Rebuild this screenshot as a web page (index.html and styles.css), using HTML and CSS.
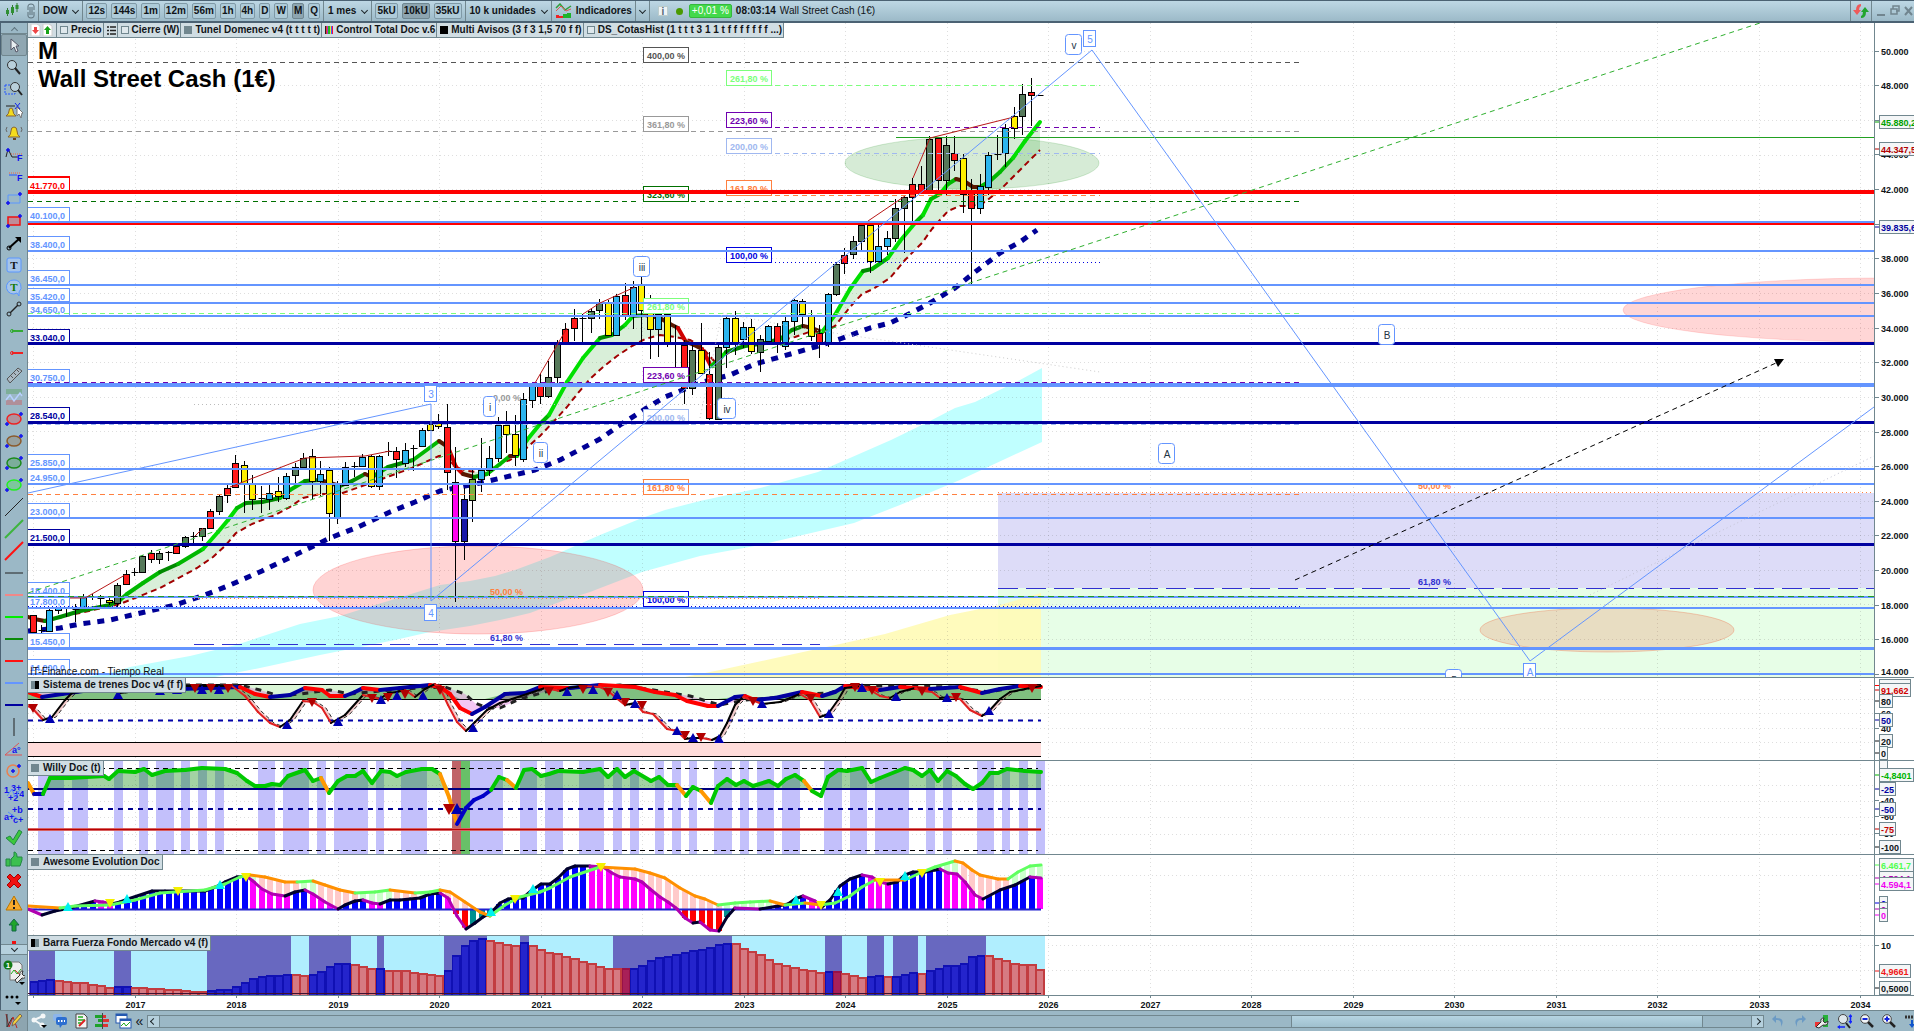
FILE: index.html
```html
<!DOCTYPE html>
<html lang="es">
<head>
<meta charset="utf-8">
<title>Wall Street Cash (1€)</title>
<link rel="stylesheet" href="styles.css">
</head>
<body>
<header class="topbar">
  <div class="group logo">
    <svg width="14" height="16" viewBox="0 0 14 16"><path d="M2.500 5v8M7.500 2v10M12 0v9" stroke="#2f7d32"/><path d="M1 7h3v4H1zM6 4h3v6H6zM10.500 2h3v4h-3z" fill="#2f8f33"/></svg>
    <svg width="8" height="16" viewBox="0 0 8 16"><path d="M1 7V3q0-2 3-2t3 2v4M1 9v4q0 2 3 2t3-2V9M3 4v8M5 4v8" fill="none" stroke="#5d717b"/></svg>
  </div>
  <button class="menu">DOW<span class="caret"></span></button>
  <div class="group frames">
    <button>12s</button><button>144s</button><button>1m</button><button>12m</button><button>56m</button><button>1h</button><button>4h</button><button>D</button><button>W</button><button class="on">M</button><button>Q</button>
  </div>
  <button class="menu">1 mes<span class="caret"></span></button>
  <div class="group units"><button>5kU</button><button class="on">10kU</button><button>35kU</button></div>
  <button class="menu">10 k unidades<span class="caret"></span></button>
  <button class="menu indicators">
    <svg width="18" height="16" viewBox="0 0 18 16"><path d="M1 5l4-4 5 6 6-4" fill="none" stroke="#2f9d3a" stroke-width="1.500"/><path d="M1 8l5-5 5 5 5-2" fill="none" stroke="#d55"/><path d="M1 15v-3h3v1h4v2z" fill="#e22"/><path d="M8 15v-4h4v-1h4v5z" fill="#1db32a"/></svg>
    Indicadores</button>
  <button class="menu narrow" aria-label="Más"><span class="caret"></span></button>
  <div class="status">
    <span class="info">i</span><span class="dot"></span><span class="badge">+0,01 %</span><b>08:03:14</b><span>Wall Street Cash (1€)</span>
  </div>
  <button class="menu sync" aria-label="Sincronizar"><svg width="16" height="16" viewBox="0 0 16 16"><path d="M8 1Q3 1 3 7H0l4 5 4-5H6q0-3 2-4z" fill="#ee5a5a"/><path d="M8 15q5 0 5-6h3l-4-5-4 5h2q0 3-2 4z" fill="#22a52f"/></svg></button>
  <div class="winctl">
    <svg width="36" height="12" viewBox="0 0 36 12"><path d="M0 10h8" stroke="#71858f" stroke-width="2"/><path d="M16 4V1h6v5h-3M14 4h6v5h-6z" fill="none" stroke="#71858f" stroke-width="1.500"/><path d="M28 2l7 8M35 2l-7 8" stroke="#71858f" stroke-width="2"/></svg>
  </div>
</header>
<div class="body">
  <nav class="side" aria-label="Herramientas">
    <button class="fold" aria-label="Subir"><span class="caret up"></span></button>
    <div class="tools" id="tools"></div>
    <button class="fold more" aria-label="Bajar"><span class="caret"></span></button>
    <div class="extra">
      <svg width="22" height="26" viewBox="0 0 22 26"><path d="M7 3h9l3 3v15H7z" fill="#eee" stroke="#777"/><path d="M8 15l3-4 3 4 4-5" stroke="#2a2" fill="none"/><path d="M12 11l6 6" stroke="#d33"/><circle cx="5" cy="6" r="4.500" fill="#117a17"/><text x="5" y="9" class="tiny">1</text><path d="M12 21l5-5q-1-4 3-4l-1 3 2 2 2-1q0 4-4 3l-5 5z" fill="#eee" stroke="#333"/><path d="M16 23h6l-3 3z"/></svg>
      <svg width="22" height="14" viewBox="0 0 22 14"><circle cx="4" cy="4" r="1.500"/><circle cx="9" cy="4" r="1.500"/><circle cx="14" cy="4" r="1.500"/><path d="M12 9h6l-3 3z"/></svg>
    </div>
  </nav>
  <main class="charts">
    <div class="tabs">
      <span class="tab arrows"><svg width="24" height="12" viewBox="0 0 24 12"><path d="M1 0h6l3 2v10H1zM13 0h6l3 2v10h-9z" fill="#fff" stroke="#ccc"/><path d="M5.500 10L2 6h2V3h3v3h2z" fill="#e44"/><path d="M17.500 2L14 6h2v4h3V6h2z" fill="#18a318"/></svg></span>
      <label class="tab"><input type="checkbox">Precio</label>
      <span class="tab"><svg width="9" height="9" viewBox="0 0 9 9"><path d="M0 1h2M3 1h6M0 4.500h2M3 4.500h6M0 8h2M3 8h6" stroke="#222" stroke-width="1.500"/></svg></span>
      <label class="tab"><input type="checkbox">Cierre (W)</label>
      <span class="tab"><i class="sw gray"></i>Tunel Domenec v4 (t t t t t)</span>
      <span class="tab"><i class="sw rainbow"></i>Control Total Doc v.6</span>
      <span class="tab"><i class="sw black"></i>Multi Avisos (3 f 3 1,5 70 f f)</span>
      <label class="tab"><input type="checkbox">DS_CotasHist (1 t t t 3 1 1 t f f f f f f f ...)</label>
    </div>
    <section class="panel main"><svg class="plot" id="p-main"></svg><svg class="axis" id="a-main"></svg>
      <div class="watermark">M<br>Wall Street Cash (1€)</div></section>
    <section class="panel p1"><svg class="plot" id="p-trenes"></svg><svg class="axis" id="a-trenes"></svg><h2 class="ptitle"><i class="sw half"></i>Sistema de trenes Doc v4 (f f)</h2></section>
    <section class="panel p2"><svg class="plot" id="p-willy"></svg><svg class="axis" id="a-willy"></svg><h2 class="ptitle"><i class="sw gray"></i>Willy Doc (t)</h2></section>
    <section class="panel p3"><svg class="plot" id="p-awesome"></svg><svg class="axis" id="a-awesome"></svg><h2 class="ptitle"><i class="sw gray"></i>Awesome Evolution Doc</h2></section>
    <section class="panel p4"><svg class="plot" id="p-barra"></svg><svg class="axis" id="a-barra"></svg><h2 class="ptitle"><i class="sw half2"></i>Barra Fuerza Fondo Mercado v4 (f)</h2></section>
    <section class="timeline"><svg class="plot" id="p-time"></svg></section>
  </main>
</div>
<footer class="bottombar">
  <button class="pencil" aria-label="Dibujar"><svg width="18" height="16" viewBox="0 0 18 16"><path d="M1 1l3 13 4-10 4 11" fill="none" stroke="#b22"/><path d="M2 1v13l5-9" fill="none" stroke="#333"/><path d="M7 13l1-4 7-8 2 2-7 8z" fill="#f4d13c" stroke="#765"/></svg></button>
  <div class="group icons">
    <button aria-label="Compartir"><svg width="16" height="16" viewBox="0 0 16 16"><path d="M12 3L3 7l8 5" fill="none" stroke="#f4f7f8" stroke-width="2"/><circle cx="12" cy="3" r="2.500" fill="#f4f7f8"/><circle cx="3" cy="7" r="2.500" fill="#f4f7f8"/><circle cx="11" cy="12" r="2.500" fill="#f4f7f8"/><path d="M10 12h6l-3 3z"/></svg></button>
    <button aria-label="Chat"><svg width="16" height="16" viewBox="0 0 16 16"><rect x="1" y="1" width="9" height="7" rx="2" fill="#8db5ea"/><rect x="4" y="4" width="11" height="8" rx="2" fill="#2d6fd0"/><path d="M7 11l1 4 3-4z" fill="#2d6fd0"/><path d="M6 8h7" stroke="#fff" stroke-width="2" stroke-dasharray="1.500 1.500"/></svg></button>
    <button aria-label="Informe"><svg width="16" height="16" viewBox="0 0 16 16"><path d="M3 1h8l3 3v11H3z" fill="#f4f4f4" stroke="#444"/><path d="M5 4h5M5 7h7M5 10h3" stroke="#2a2" stroke-width="1.500"/><path d="M6 13l6-6" stroke="#d22" stroke-width="2"/></svg></button>
    <button aria-label="Ordenes"><svg width="16" height="16" viewBox="0 0 16 16"><path d="M1 2h7v3H1zM4 6h4v3H4zM1 11h7v3H1z" fill="#1da22c"/><path d="M9 2h3v3H9zM9 6h6v3H9zM9 11h5v3H9z" fill="#d33"/><path d="M8.500 0v16" stroke="#444"/></svg></button>
    <button aria-label="Ventanas"><svg width="17" height="16" viewBox="0 0 17 16"><rect x="1" y="1" width="11" height="9" fill="#fff" stroke="#2459b0"/><path d="M1 2h11" stroke="#2459b0" stroke-width="2"/><rect x="5" y="6" width="11" height="9" fill="#fff" stroke="#2459b0"/><path d="M5 7h11" stroke="#2459b0" stroke-width="2"/><path d="M6 13l3-3 2 3 4-4" fill="none" stroke="#2a2"/></svg></button>
  </div>
  <button class="dbl" aria-label="Plegar">«</button>
  <div class="scroll">
    <button aria-label="Izquierda"><span class="caret left"></span></button>
    <div class="track"><div class="thumb"></div></div>
    <button aria-label="Derecha"><span class="caret right"></span></button>
  </div>
  <div class="group zooms">
    <button aria-label="Deshacer"><svg width="14" height="14" viewBox="0 0 14 14"><path d="M5 1L1 5l4 4V6q6-1 5 7 5-9-5-9z" fill="#6b9ac4"/></svg></button>
    <button aria-label="Rehacer"><svg width="14" height="14" viewBox="0 0 14 14"><path d="M9 1l4 4-4 4V6Q3 5 4 13-1 4 9 4z" fill="#6b9ac4"/></svg></button>
    <button aria-label="Ajustes"><svg width="14" height="15" viewBox="0 0 14 15"><path d="M8 1h5v12H8z" fill="#27b13a"/><path d="M0 8h6v5H0z" fill="#e33"/><path d="M1 13l5-5q-1-4 3-4l-1 3 2 2 3-2q0 5-5 4l-4 3z" fill="#eee" stroke="#333"/></svg></button>
    <button aria-label="Ajustar zoom"><svg width="15" height="15" viewBox="0 0 15 15"><circle cx="6" cy="5" r="4.500" fill="#dfe8ec" stroke="#444"/><path d="M9 9l4 5" stroke="#222" stroke-width="2"/><path d="M13.500 1v8M1 13h7" stroke="#12f" stroke-width="1.500"/><path d="M11.500 3l2-3 2 3zM11.500 7l2 3 2-3zM3 11l-3 2 3 2z" fill="#12f"/></svg></button>
    <button aria-label="Alejar"><svg width="14" height="14" viewBox="0 0 14 14"><path d="M8 8l5 5" stroke="#222" stroke-width="2.500"/><circle cx="5" cy="5" r="4.300" fill="#f2f6f8" stroke="#444"/><path d="M2.500 5h5" stroke="#12d" stroke-width="2"/></svg></button>
    <button aria-label="Acercar"><svg width="14" height="14" viewBox="0 0 14 14"><path d="M8 8l5 5" stroke="#222" stroke-width="2.500"/><circle cx="5" cy="5" r="4.300" fill="#f2f6f8" stroke="#444"/><path d="M2.500 5h5M5 2.500v5" stroke="#12d" stroke-width="2"/></svg></button>
    <button aria-label="Fecha"><svg width="14" height="14" viewBox="0 0 14 14"><path d="M1 3h13" stroke="#333" stroke-width="3" stroke-dasharray="2 1"/><path d="M5 10l3 4 3-4H9V6H7v4z" fill="#15c"/></svg></button>
  </div>
</footer>
<script src="chart.js"></script>
</body>
</html>
```

FILE: styles.css
```css
* { box-sizing: border-box; }
html, body { height: 100%; margin: 0; }
body {
  display: flex;
  flex-direction: column;
  overflow: hidden;
  background: #fff;
  color: #101418;
  font: bold 10px/12px "Liberation Sans", Arial, sans-serif;
}
button {
  margin: 0;
  padding: 0;
  border: 0;
  background: none;
  color: inherit;
  font: inherit;
}
svg { display: block; flex: none; }

.topbar {
  flex: none;
  display: flex;
  height: 23px;
  border-top: 1px solid #4b6273;
  border-bottom: 2px solid #4b6273;
  background: linear-gradient(#bdd7e4, #9cbac8);
}
.group { display: flex; align-items: center; }
.logo { gap: 8px; width: 39px; padding: 0 5px; border-right: 1px solid #71878f; }
.menu {
  display: flex;
  align-items: center;
  gap: 6px;
  padding: 0 4px;
  border-right: 1px solid #71878f;
}
.caret {
  flex: none;
  width: 5px;
  height: 5px;
  border: solid #1d262b;
  border-width: 0 1px 1px 0;
  transform: translateY(-1px) rotate(45deg);
}
.caret.up { transform: translateY(2px) rotate(225deg); border-color: #5f747e; }
.caret.left { transform: rotate(135deg); }
.caret.right { transform: rotate(-45deg); }
.frames, .units { gap: 4px; padding: 0 3px; border-right: 1px solid #71878f; }
.frames button, .units button {
  height: 16px;
  padding: 0 1px;
  border: 1px solid #7f99a6;
  border-radius: 2px;
  background: #aecbd9;
}
.frames .on, .units .on { background: #8da5b0; border-color: #6f8791; }
.indicators { gap: 3px; padding: 0 3px; }
.status { flex: 1; display: flex; align-items: center; gap: 4px; padding-left: 8px; font-weight: normal; }
.info { width: 10px; height: 10px; background: #eef3f5; border: 1px solid #bcc; color: #567; line-height: 9px; text-align: center; font-weight: bold; }
.dot { width: 7px; height: 7px; margin: 0 2px 0 4px; border-radius: 50%; background: #4a9a00; }
.badge { padding: 0 2px; border-radius: 2px; background: #43d94b; border: 1px solid #34b83c; color: #fff; }
.sync { padding: 0 2px; border-left: 1px solid #71878f; }
.winctl { display: flex; align-items: center; padding-left: 5px; width: 28px; overflow: hidden; }
.winctl { width: 42px; }

.body { flex: 1; display: flex; min-height: 0; }
.side {
  flex: none;
  display: flex;
  flex-direction: column;
  width: 28px;
  border-left: 1px solid #4b6273;
  border-right: 1px solid #71878f;
  background: #9bb8c6;
}
.fold { flex: none; display: flex; justify-content: center; align-items: center; height: 11px; border-bottom: 1px solid #71878f; }
.fold.more { border: 1px solid #71878f; border-width: 1px 0; background: #b5d0dd; }
.tools { flex: 1; min-height: 0; overflow: hidden; }
.tool { display: flex; align-items: center; justify-content: center; width: 26px; height: 22px; }
.tool.on { background: #90a7b2; border: 1px solid #71878f; border-radius: 2px; }
.extra { flex: none; display: flex; flex-direction: column; align-items: center; gap: 8px; height: 55px; padding-top: 4px; }
text.tiny { font-size: 8px; fill: #fff; text-anchor: middle; }
text.letter { font: bold 11px "Liberation Serif", serif; text-anchor: middle; }

.charts { flex: 1; position: relative; display: flex; flex-direction: column; min-width: 0; }
.tabs { position: absolute; left: 0; top: 0; z-index: 2; display: flex; height: 15px; }
.tab {
  display: flex;
  align-items: center;
  gap: 3px;
  padding: 0 1px 0 3px;
  border: solid #71878f;
  border-width: 0 1px 1px 0;
  background: #d0dde3;
  white-space: nowrap;
}
.arrows { padding: 0 2px; }
.tab input { flex: none; appearance: none; width: 8px; height: 8px; margin: 0; border: 1px solid #71878f; background: #dfe8ec; }
.sw { flex: none; width: 8px; height: 8px; background: #71878f; }
.black { background: #000; }
.rainbow { background: linear-gradient(90deg, #222 0 1px, #e33 1px 2px, #a3c 2px 3px, #2b2 3px 5px, #e8e83a 5px 6px, #36f 6px 7px, #f04 7px); }
.half { background: linear-gradient(90deg, #71878f 50%, #000 50%); }
.half2 { background: linear-gradient(90deg, #000 50%, #71878f 50%); }
.panel { position: relative; display: flex; min-height: 0; border-top: 1px solid #71878f; }
.panel.main { flex: 1; border-top: 0; }
.p1 { height: 83px; }
.p2 { height: 94px; }
.p3 { height: 81px; }
.p4 { height: 60px; }
.plot { flex: 1; min-width: 0; height: 100%; }
.axis { width: 40px; height: 100%; border-left: 1px solid #71878f; }
.timeline { flex: none; height: 15px; display: flex; border-top: 1px solid #71878f; }
.ptitle {
  position: absolute;
  left: 0;
  top: 0;
  display: flex;
  align-items: center;
  gap: 4px;
  height: 15px;
  margin: 0;
  padding: 0 2px 0 3px;
  border: solid #71878f;
  border-width: 0 1px 1px 0;
  background: #d0dde3;
  font: inherit;
}
.watermark { position: absolute; left: 10px; top: 14px; font-size: 24px; line-height: 28px; color: #000; }
text { font: bold 9px "Liberation Sans", Arial, sans-serif; }
text.mid { text-anchor: middle; }
text.wave { font-weight: normal; font-size: 10px; text-anchor: middle; }
text.plain { font-weight: normal; font-size: 10px; }
text.year { font-size: 9px; text-anchor: middle; }

.bottombar { flex: none; display: flex; align-items: center; height: 21px; border-top: 1px solid #71878f; background: #9bb8c6; }
.pencil { display: flex; align-items: center; justify-content: center; width: 28px; height: 20px; border-right: 1px solid #71878f; background: #8da5b0; }
.icons { gap: 5px; padding-left: 3px; }
.dbl { width: 15px; font-size: 14px; font-weight: normal; }
.scroll { flex: 1; display: flex; height: 13px; border: 1px solid #71878f; }
.scroll button { width: 12px; display: flex; align-items: center; justify-content: center; background: #b5d0dd; border-right: 1px solid #71878f; }
.scroll button:last-child { border: 0; border-left: 1px solid #71878f; }
.track { flex: 1; display: flex; padding-left: 70%; padding-right: 3%; }
.thumb { flex: 1; border: 1px solid #71878f; border-width: 0 1px; background: linear-gradient(#b5d4e2, #9fc0ce); }
.zooms { gap: 8px; width: 150px; padding-left: 7px; overflow: hidden; }
```

FILE: chart.js
```js
const STEP = 8.458, X0 = 33.5;
const AXIS = '#71878f';
const xAt = i => X0 + i * STEP;
const pts = a => a.map(p => p.join()).join(' ');
const line = (x1, y1, x2, y2, c, w = 1, d = '') =>
  `<line x1="${x1}" y1="${y1}" x2="${x2}" y2="${y2}" stroke="${c}" stroke-width="${w}" stroke-dasharray="${d}"/>`;
const rect = (x, y, w, h, f, s = 'none', r = 0) =>
  `<rect x="${x}" y="${y}" width="${w}" height="${h}" fill="${f}" stroke="${s}" rx="${r}"/>`;
const poly = (a, c, w = 1, d = '') =>
  `<polyline points="${pts(a)}" fill="none" stroke="${c}" stroke-width="${w}" stroke-dasharray="${d}" stroke-linejoin="round"/>`;
const area = (a, f) => `<polygon points="${pts(a)}" fill="${f}"/>`;
const text = (x, y, t, c, k = '') => `<text x="${x}" y="${y}" fill="${c}" class="${k}">${t}</text>`;
const tri = (x, y, up, c, r = 5) => `<path d="M${x - r} ${up ? y + r - 1 : y - r + 1}h${2 * r}l${-r} ${up ? -2 * r + 1 : 2 * r - 1}z" fill="${c}"/>`;
const P = s => s.trim().split(/\s+/).map(p => p.split(',').map(Number));
const yOn = (a, x) => {
  for (let i = 1; i < a.length; i++) if (x <= a[i][0]) {
    const [p, q] = [a[i - 1], a[i]];
    return p[1] + (q[1] - p[1]) * (x - p[0]) / (q[0] - p[0]);
  }
  return a[a.length - 1][1];
};
const bySlope = (a, w, pick) => a.slice(1).map((q, i) => {
  const p = a[i];
  return `<line x1="${p[0]}" y1="${p[1]}" x2="${q[0]}" y2="${q[1]}" stroke="${pick((q[1] - p[1]) / (q[0] - p[0]), q)}" stroke-width="${w}" stroke-linecap="round"/>`;
}).join('');
const put = (id, x, y, s) => { document.getElementById(id).innerHTML = `<g transform="translate(${-x},${-y})">${s}</g>`; };
const FAR = 4000;
const vgrid = (y1, y2) => {
  let s = '';
  for (let k = 0; k < 30; k++) { const x = Math.round(X0 + 101.5 * k - .4) + 0.5; s += line(x, y1, x, y2, 'rgba(90,90,90,.2)', 1, '1 3'); }
  return s;
};
const hgrid = ys => ys.map(y => line(28, y + .5, FAR, y + .5, 'rgba(90,90,90,.2)', 1, '1 3')).join('');

// Candles: colour, high, top, bottom, low
const COL = { r: '#ff1a1a', y: '#fff000', b: '#2cb5ee', g: '#56795a', k: '#000', m: '#ff00ee', n: '#1818a8', o: '#7cb342' };
const CANDLES = `r,615,615,632,633 k,625,630,631,633 b,608,610,631,632 b,606,608,610,614 k,600,607,608,617 k,604,609,610,622
b,594,597,607,608 k,594,597,598,600 k,595,598,599,606 y,598,600,602,605 g,583,585,603,607 r,570,574,584,585 k,568,572,573,576
g,555,556,572,573 r,550,553,559,563 g,551,553,559,564 k,551,552,553,561 r,544,546,553,554 g,536,537,546,548 k,532,536,537,543
g,528,528,536,541 r,509,511,528,529 g,495,496,511,515 r,485,488,495,503 r,455,463,487,488 y,461,465,483,513 y,475,483,499,510
k,486,498,499,513 b,483,493,499,510 y,477,491,496,502 b,473,476,498,500 g,463,467,475,485 g,453,458,467,470 y,449,456,481,499
b,461,474,481,496 y,467,470,513,541 b,481,484,517,524 b,462,467,485,486 k,462,466,467,477 b,454,457,466,467 y,455,456,486,488
b,455,456,486,490 k,442,451,452,456 r,447,451,459,478 b,443,450,463,467 k,445,448,449,471 b,428,430,446,447 y,423,424,430,431
y,414,421,426,429 r,404,427,472,490 m,447,482,541,602 n,488,499,541,560 o,470,479,500,522 b,438,470,479,492 b,446,458,470,476
b,417,425,458,462 y,411,425,434,453 y,415,434,455,466 b,393,399,459,462 b,382,385,400,408 r,374,386,396,404 g,361,377,396,398
g,340,344,377,387 r,323,329,344,344 r,309,318,328,341 k,314,318,319,343 g,308,311,318,333 g,299,303,310,319 y,300,303,335,336
b,294,296,335,336 r,283,295,316,320 b,281,287,316,329 y,277,285,310,343 y,295,310,329,359 b,300,314,329,357 y,309,314,343,347
k,325,342,343,367 r,340,345,388,404 g,345,350,388,395 y,323,350,373,374 r,352,374,418,420 g,344,347,419,420 b,316,318,347,368
y,311,318,342,355 b,322,327,339,348 y,319,327,351,354 g,335,339,352,372 b,325,326,341,342 r,323,326,343,353 b,317,321,346,350
b,299,300,321,335 y,299,301,314,328 y,310,315,336,341 r,325,333,343,358 b,293,294,343,347 g,262,264,294,296 r,248,255,263,274
g,236,241,254,259 g,224,225,241,251 y,224,225,261,273 b,225,246,261,262 b,231,238,246,255 g,199,208,238,242 g,196,197,208,253
r,178,184,197,221 r,166,184,192,193 g,136,139,191,192 r,137,138,180,191 g,136,145,180,195 r,136,153,160,171 y,154,158,194,213
r,179,192,208,284 b,174,186,208,214 b,152,155,187,195 k,135,154,155,160 b,124,128,153,167 y,107,116,128,139 g,84,94,116,135
r,78,92,95,126 k,95,95,96,96`.trim().split(/\s+/).map(c => c.split(','));

const FAST = P(`28,617 34,619 45,621 60,617 80,611 110,605 120,600 127,594 143,583 160,572 178,564 203,549 218,532 228,520 237,508
246,503 262,502 280,498 290,490 305,481 320,480 340,486 352,481 365,474 372,477 388,467 413,460 439,441 448,447 456,467 463,474
474,477 487,474 500,464 510,456 517,456 527,440 540,424 549,415 567,382 583,358 600,338 612,335 625,325 633,316 645,315 660,318
670,324 678,328 686,342 694,345 702,349 711,366 720,359 726,352 745,346 765,343 780,339 792,330 803,326 812,328 822,332 835,315
850,289 863,271 872,269 888,258 900,241 915,223 923,215 931,199 940,194 948,184 956,179 964,181 973,187 980,187 990,181 1000,172
1013,158 1025,141 1040,122`);
const MID = P(`45,620 80,613 120,604 135,598 160,588 197,568 213,557 225,546 236,533 252,524 275,515 290,507 303,498 320,494 340,494
365,485 390,476 412,468 439,456 446,455 455,467 468,471 478,472 495,466 510,460 522,452 540,436 556,419 567,407 578,393 590,379
602,368 617,356 632,346 645,339 660,335 675,337 690,340 700,345 715,362 730,352 745,346 775,342 795,337 812,331 822,333 835,326
850,307 862,294 873,289 890,278 905,260 922,243 932,229 948,211 960,206 972,206 985,202 1000,190 1020,170 1040,150`);
const SLOW = P(`28,631 60,628 80,624 110,620 145,612 175,605 205,595 230,585 262,571 293,556 330,538 358,527 390,512 415,502 440,491
460,487 480,483 510,476 535,470 560,460 600,439 620,425 645,409 665,397 680,391 703,382 730,375 755,364 780,357 815,347 840,339
870,328 890,323 905,316 930,303 955,288 975,272 1000,253 1020,242 1037,230`);
const CYAN = P(`110,673 130,667 190,656 236,645 300,624 340,616 375,605 395,599 440,585 470,581 495,576 515,570 550,557 600,535 642,518
665,510 700,501 760,488 818,472 891,440 930,421 955,408 975,402 1020,380 1042,368 1042,442 960,480 900,505 854,523 760,545 700,556
642,572 590,592 565,600 530,613 500,620 470,626 430,632 395,640 320,655 260,668 210,678 80,678`);

function drawMain() {
  let s = rect(998, 493, FAR, 95, '#dddcf8') + rect(998, 588, FAR, 400, '#e7fee7');
  s += area(CYAN, '#c0ffff');
  s += area(P('685,677 705,673 720,670 780,657 840,644 885,634 950,615 1000,605 1041,593 1041,678 685,678'), 'rgba(255,251,182,.9)');
  s += vgrid(23, 900) + hgrid([51, 85, 120, 155, 189, 224, 258, 293, 328, 362, 397, 431, 466, 501, 535, 570, 604, 639]);
  const ell = (x, y, a, b, f, k) => `<ellipse cx="${x}" cy="${y}" rx="${a}" ry="${b}" fill="${f}" stroke="${k}"/>`;
  s += ell(972, 163, 127, 26, 'rgba(0,128,0,.16)', 'rgba(0,128,0,.16)') + ell(478, 590, 165, 44, 'rgba(255,0,0,.17)', 'rgba(255,0,0,.17)')
    + ell(1885, 310, 262, 32, 'rgba(255,0,0,.16)', 'rgba(255,0,0,.12)') + ell(1607, 630, 127, 22, 'rgba(240,90,50,.2)', 'rgba(240,90,50,.3)');
  s += area(FAST.concat([...MID].reverse()), 'rgba(0,150,0,.15)');
  s += poly(MID, '#a00000', 2, '6 4');
  s += bySlope(FAST, 4, k => k < -1.1 ? '#00e000' : k < -.55 ? '#00b800' : k < 0 ? '#008a00' : k < .8 ? '#5a1800' : '#d00000');
  s += poly(SLOW, '#000096', 5, '7 7');
  CANDLES.forEach((c, i) => {
    const x = Math.round(xAt(i)) - .5, t = +c[2], b = +c[3];
    s += line(x, c[1], x, c[4], '#000');
    s += c[0] === 'k' ? line(x - 3, t + .5, x + 4, t + .5, '#000') : rect(x - 3, t + .5, 6, b - t, COL[c[0]], '#000');
  });
  const B = '#6495ff', N = '#0000a0';
  const prices = [[192, '41.770,0', 'red'], [222, '40.100,0', B], [251, '38.400,0', B], [285, '36.450,0', B], [303, '35.420,0', B], [316, '34.650,0', B],
    [344, '33.040,0', N], [384, '30.750,0', B], [422, '28.540,0', N], [469, '25.850,0', B], [484, '24.950,0', B], [518, '23.000,0', B], [544, '21.500,0', N],
    [597, '18.400,0', B], [608, '17.800,0', B], [648, '15.450,0', B], [674, '14.000,0', B]];
  prices.forEach(([y, t, c]) => { s += rect(27.5, y - 14.5, 42, 14, '#fff', c) + text(30, y - 3, t, c); });
  s += line(28, 176.500, 70, 176.500, 'red');
  [[62, '400,00 %', '#555'], [131, '361,80 %', '#999'], [201, '323,60 %', '#007000'], [313, '261,80 %', '#7cff7c'], [382, '223,60 %', '#7000b0'],
    [424, '200,00 %', '#a0b8f0'], [494, '161,80 %', '#ff8040'], [606, '100,00 %', '#0000e0']].forEach(([y, t, c]) => {
    s += rect(643.5, y - 14.5, 45, 15, '#fff', c) + text(666, y - 3, t, c, 'mid');
    s += line(28, y + .5, 640, y + .5, c, 1, c === '#0000e0' ? '1 3' : '5 4') + line(691, y + .5, 1302, y + .5, c, 1, c === '#0000e0' ? '1 3' : '5 4');
  });
  [[85, '261,80 %', '#7cff7c'], [127, '223,60 %', '#7000b0'], [153, '200,00 %', '#a0b8f0'], [195, '161,80 %', '#ff8040'], [262, '100,00 %', '#0000e0']].forEach(([y, t, c]) => {
    s += rect(726.5, y - 14.5, 45, 15, '#fff', c) + text(749, y - 3, t, c, 'mid') + line(775, y + .5, 1100, y + .5, c, 1, y === 262 ? '1 3' : '5 4');
  });
  s += line(194, 404.500, 820, 404.500, '#bbb', 1, '1 3') + line(194, 598.500, 820, 598.500, '#ff8040', 1, '1 3') + line(194, 644.500, 820, 644.500, '#3030d0', 1, '20 8');
  s += text(493, 401, '0,00 %', '#999') + text(490, 595, '50,00 %', '#ff8040') + text(490, 641, '61,80 %', '#3030d0');
  s += line(998, 492.500, FAR, 492.500, '#ff8040', 1, '1 3') + line(998, 588.500, FAR, 588.500, '#3030d0', 1, '20 8');
  s += text(1418, 489, '50,00 %', '#ff8040') + text(1418, 585, '61,80 %', '#3030d0');
  const h = (y, c, w) => line(28, y, FAR, y, c, w);
  s += h(192, 'red', 4) + h(224, 'red', 2) + h(222, B, 2) + h(251, B, 2) + h(285, B, 2) + h(303, B, 2) + h(316, B, 2) + h(343.500, N, 3) + h(385, B, 4)
    + h(422.500, N, 3) + h(469, B, 2) + h(484, B, 2) + h(518, B, 2) + h(544.500, N, 3) + h(597, B, 2) + h(608, B, 2) + h(648.500, B, 3) + h(674, B, 2);
  s += line(28, 596.500, FAR, 596.500, '#22a022', 1, '6 4') + line(896, 137.500, FAR, 137.500, '#22a022');
  ['85,598 125,575', '70,598 85,598', '195,536 203,528', '230,487 305,458 365,456 390,451', '535,383 567,328', '583,314 600,303 635,287', '868,221 905,196', '913,178 930,138 1014,117']
    .forEach(a => { s += poly(P(a), '#b81818'); });
  s += line(28, 593, 1760, 23, '#30b030', 1, '5 4') + poly(P('700,418 722,313 800,328 1100,372'), '#ccc', 1, '1 3') + line(1590, 595, 1874, 456, '#c4c4d4', 1, '1 3');
  s += poly(P('28,493 431,404 431,601 1092,50 1530,661 1874,407 2300,92'), B);
  s += line(1295, 580, 1776, 363, '#000', 1, '5 4') + '<path d="M1774 359l10 0-6 8z"/>';
  [[642, 267, 'iii', 16], [490, 407, 'i', 12], [541, 453, 'ii', 14], [727, 409, 'iv', 18], [1074, 45, 'v', 16], [1387, 335, 'B', 16], [1167, 454, 'A', 16], [1454, 680, '5', 16]].forEach(([x, y, t, w]) => {
    s += rect(x - w / 2 - .5, y - 10.5, w, 20, '#fff', B, 3) + text(x, y + 4, t, '#234', 'wave');
  });
  [[431, 394, '3'], [431, 613, '4'], [1090, 39, '5'], [1530, 672, 'A']].forEach(([x, y, t]) => { s += rect(x - 6.500, y - 8.500, 12, 16, '#fff', B) + text(x, y + 4, t, B, 'wave'); });
  s += text(30, 675, 'IT-Finance.com - Tiempo Real', '#111', 'plain');
  put('p-main', 28, 23, s);
  let a = '';
  for (let k = 0; k < 19; k++) {
    const y = Math.round(50.500 + k * 34.640) + .5;
    a += line(1874, y, 1879, y, AXIS) + text(1881, Math.min(y + 3, 675), (50 - 2 * k) + '.000', '#101418');
  }
  a += tag(122, '45.880,2', '#00a000') + tag(149, '44.347,5', '#b00000') + tag(227, '39.835,6', '#0000a0');
  put('a-main', 1875, 23, a);
}
function tag(y, t, c, w = 40) {
  return line(1874, y, 1879, y, c) + rect(1879.500, y - 6.500, w, 13, '#f4f6f7', AXIS) + text(1881, y + 3.500, t, c);
}
const tick = (y, t) => line(1874, y + .5, 1879, y + .5, AXIS) + text(1881, y + 4, t, '#101418');

function drawTrenes() {
  const slow = P(`28,692 33,694 42,697 62,694 90,690 130,688 180,689 240,687 255,694 270,697 290,695 305,688 322,690 330,696 345,696 355,692 363,688
380,690 400,688 430,685 440,687 450,694 460,708 472,714 485,707 505,694 525,693 540,687 570,688 600,685 635,687 655,692 675,695 687,701
708,706 718,706 735,697 745,696 755,700 775,698 802,692 822,696 835,692 845,686 880,690 900,687 930,689 960,687 982,693 1000,689 1020,686 1041,687`);
  const fast = P(`28,706 33,709 43,720 52,717 65,700 72,693 110,688 120,693 180,686 232,686 245,696 258,712 270,723 280,727 290,720 303,701 313,702
322,708 331,723 345,715 363,695 372,697 380,699 388,693 397,692 405,690 415,697 425,689 435,684 440,688 448,705 457,722 466,731 475,722
487,710 500,703 512,699 530,693 545,688 560,691 568,688 583,686 600,687 608,691 615,697 625,705 635,703 643,712 653,714 667,729 677,731
685,739 693,738 702,738 712,740 720,736 727,723 735,705 743,697 752,700 762,704 780,702 800,694 810,700 820,717 828,714 838,700 845,688
860,686 870,690 880,696 890,698 900,692 915,688 922,691 932,692 940,698 950,697 960,699 970,710 982,716 990,710 1000,699 1010,692 1025,689 1041,686`);
  const dash = P(`28,690 110,687 180,685 240,685 260,690 280,696 300,694 330,690 350,694 380,691 420,688 445,687 465,694 475,703 487,708 500,708 520,699
545,692 570,688 620,685 660,691 690,696 720,705 745,700 770,698 800,694 830,693 850,686 900,686 950,687 990,692 1020,686 1041,687`);
  const shift = fast.map(([x, y]) => [Math.min(x + 4, 1041), y]);
  let s = vgrid(677, 760) + hgrid([699, 713, 728, 742]);
  s += rect(28, 684, 1013, 15, '#daf5d6') + rect(28, 742, 1013, 14, '#ffdcda');
  s += area([[28, 699], ...slow.map(([x, y]) => [x, Math.min(y, 699)]), [1041, 699]], '#80c080');
  s += area(slow.concat([...dash].reverse()), 'rgba(200,0,200,.22)');
  s += area(fast.concat([...shift].reverse()), 'rgba(220,110,110,.35)');
  s += line(28, 684.500, 1041, 684.500, '#000') + line(28, 699.500, 1041, 699.500, '#000') + line(28, 742.500, 1041, 742.500, '#000') + line(28, 756.500, 1041, 756.500, '#000');
  s += line(28, 720.500, 1041, 720.500, '#0000a8', 2, '5 5') + poly(shift, '#333', 1, '4 3') + poly(dash, '#222', 3, '6 6');
  s += bySlope(slow, 4, k => k < 0 ? '#0000a0' : '#ff0000') + bySlope(fast, 2, k => k <= 0 ? '#000' : '#e02020');
  P(`33,708 195,688 211,688 228,688 312,702 372,698 388,697 405,694 440,690 549,691 583,689 608,692 625,702 642,705 685,735 701,737 753,701 811,698
855,687 872,690 922,691 956,697 1032,688`).forEach(p => { s += tri(p[0], p[1], false, '#b00000'); });
  P(`50,719 118,695 160,691 177,690 202,690 219,690 287,725 338,722 381,700 397,696 423,696 473,728 567,692 593,690 617,695 635,704 677,731 693,738
719,739 762,704 829,714 862,688 896,697 947,698 989,711`).forEach(p => { s += tri(p[0], p[1], true, '#0000b0'); });
  put('p-trenes', 28, 678, s);
  put('a-trenes', 1875, 678, tick(713, '60') + tick(728, '40') + rect(1879.500, 679.500, 31, 10, '#f4f6f7', AXIS) + line(1874, 685.500, 1879, 685.500, 'red')
    + tag(690, '91,662', '#d00000', 31) + tag(701, '80', '#101418', 13) + tag(720, '50', '#0000a0', 13) + tag(741, '20', '#101418', 13) + tag(753, '0', '#101418', 8));
}

function drawWilly() {
  const w = P(`28,783 34,794 43,794 50,778 70,778 104,776 109,779 118,771 135,772 144,769 152,775 165,771 185,770 202,768 225,769 237,773 247,781 255,786
265,786 272,784 280,785 288,776 305,770 313,781 321,778 329,793 338,781 347,776 355,776 363,771 372,783 381,771 390,772 397,776 406,772
422,769 432,769 440,774 449,797 457,824 466,808 474,800 483,796 491,790 499,777 507,780 516,788 524,770 532,769 541,776 549,774 558,771 583,772
600,769 608,777 617,769 625,777 634,771 651,781 659,777 668,785 677,785 686,796 693,787 701,791 711,803 718,786 727,779 736,785 744,781 753,786
769,781 778,786 786,779 795,775 804,781 812,791 821,796 828,777 838,770 847,771 862,768 871,782 880,778 905,768 913,770 922,776 930,770 938,781
947,771 956,776 965,784 973,789 982,783 990,773 998,773 1007,769 1025,771 1041,772`);
  let s = vgrid(760, 854) + hgrid([785, 801, 817, 834]);
  P(`38,64 72,88 114,123 139,148 156,174 181,190 198,207 215,224 258,275 283,309 317,326 334,368 376,384 401,427 470,503 520,537 545,563 579,604
613,622 630,639 655,664 672,681 689,697 714,732 740,749 757,774 782,800 824,842 850,867 875,909 926,935 943,952 977,994 1002,1010 1019,1028 1036,1045`)
    .forEach(([a, b]) => { s += rect(a, 760, b - a, 94, '#c3c0fb'); });
  s += rect(452, 760, 9, 94, '#c06468') + rect(461, 760, 9, 94, '#68c068');
  s += area([[28, 789], ...w.map(([x, y]) => [x, Math.min(y, 789)]), [1041, 789]], 'rgba(0,130,0,.36)');
  s += line(28, 768.500, 1038, 768.500, '#000', 1, '5 4') + line(28, 850.500, 1038, 850.500, '#000', 1, '5 4');
  s += line(28, 789, 1041, 789, '#000080', 2) + line(28, 809, 1041, 809, '#000090', 2, '5 5') + line(28, 829.500, 1041, 829.500, '#d86060', 3) + line(28, 829.500, 1041, 829.500, '#b80000', 1);
  s += bySlope(w, 4, (k, q) => q[0] < 50 && q[0] > 40 && q[1] > 790 ? '#0000b8' : q[0] > 460 && q[0] < 492 ? '#0000c8' : k > .8 && q[1] > 786 ? '#ff9800' : '#00c800');
  s += tri(449, 809, false, '#b00000', 6) + tri(457, 809, true, '#0000b0', 6);
  put('p-willy', 28, 761, s);
  put('a-willy', 1875, 761, rect(1879.500, 755.500, 8, 13, '#f4f6f7', AXIS) + tick(800, '-40') + tick(816, '-60') + tick(833, '-80')
    + tag(775, '-4,8401', '#00b400', 34) + tag(789, '-25', '#0000a0', 16) + tag(809, '-50', '#0000a0', 16) + tag(829, '-75', '#c00000', 16) + tag(847, '-100', '#101418', 21));
}

function drawAwesome() {
  const ao = P(`28,909 42,915 55,911 70,908 95,901 103,902 112,904 120,902 128,899 152,891 165,891 205,891 218,886 225,882 237,877 246,876 253,881 262,889
272,894 285,896 295,892 305,890 313,894 325,902 338,909 345,905 355,901 363,900 372,903 380,904 390,900 400,900 410,899 420,898 430,894 440,893
448,898 457,916 466,929 475,923 483,917 491,913 500,903 508,899 516,898 523,898 531,891 541,884 550,884 558,878 567,869 575,866 590,866 603,867
612,873 620,877 635,879 642,882 650,889 660,897 668,902 676,908 685,918 693,923 700,922 710,930 719,931 727,917 735,908 760,909 778,906 788,904
795,899 803,896 815,901 822,907 830,900 840,886 850,879 862,875 872,877 880,882 888,884 897,882 905,875 913,872 925,872 935,870 940,869 948,873
957,874 965,882 975,895 983,899 1000,890 1015,885 1030,877 1041,878`);
  const sig = P(`28,906 60,908 75,906 110,905 135,900 160,893 205,890 225,884 240,877 250,875 265,877 285,882 297,882 313,881 325,885 340,890 355,893 375,892
390,890 415,893 430,892 440,890 450,892 465,902 480,912 490,916 505,905 520,897 540,892 550,888 570,877 600,867 635,869 650,873 665,878 680,888
695,896 705,899 718,905 735,903 750,902 770,901 785,905 805,903 820,905 835,903 850,896 862,887 875,880 905,880 920,873 935,867 955,861 963,863
972,870 980,875 998,879 1008,879 1018,872 1030,866 1041,865`);
  let s = vgrid(854, 935) + hgrid([875]);
  for (let i = 0; i < 120; i++) {
    const x = Math.round(xAt(i)), y = yOn(ao, x), d = y - yOn(ao, x - 8), g = yOn(sig, x), z = 909;
    if (g < y - 2) s += rect(x - 3, g, 6, Math.min(y, z) - g, g < yOn(sig, x - 8) ? '#ccffcc' : '#ffcaca');
    if (i > 4) s += rect(x - 3, Math.min(y, z), 6, Math.abs(z - y), y > z ? (d > 0 ? '#ff0000' : '#009090') : (d > 0 ? '#ff00ff' : '#0000ff'));
  }
  s += line(28, 909.500, 1041, 909.500, '#2020d0', 2);
  s += bySlope(ao, 3, k => k <= 0 ? '#00002c' : '#b000b0') + bySlope(sig, 3, k => k < 0 ? '#60ff60' : '#ff9000');
  P('68,907 127,899 220,885 491,912 533,889 796,900 838,892 905,876').forEach(p => { s += tri(p[0], p[1], true, '#00f0f0'); });
  P('110,903 178,891 246,877 515,899 601,867 821,905 880,882 922,873').forEach(p => { s += tri(p[0], p[1], false, '#f4f000'); });
  put('p-awesome', 28, 855, s);
  put('a-awesome', 1875, 855, tag(865, '6.461,7', '#50ff50', 34) + tag(878, '4.594,1', '#b000b0', 34) + tag(884, '4.594,1', '#f000f0', 34)
    + tag(903, '0', '#0000e0', 8) + tag(909, '0', '#b000b0', 8) + tag(915, '0', '#f000f0', 8));
}

function drawBarra() {
  const tops = `981b 980b 979b 980r 981r 982r 982r 984r 985r 987r 986b 986b 987r 987r 988r 988r 989r 989r 990r 991r 991r 990b 989b 989b 986b 982b 978b 976b
975b 975b 974b 974r 975r 974b 971b 966b 963b 963b 964r 966r 968r 968b 970r 970r 970r 972r 973r 974r 975r 970b 955b 945b 940b 938b 940r 942r 944r 945r 942b
945r 949r 952r 953r 956r 958r 961r 963r 966r 968r 968r 968m 968b 965b 960b 957b 956b 954b 952b 950b 949b 947b 944b 943b 943r 948r 951r 954r 959r 963r 965r
967r 969r 970r 972r 971b 971m 973r 975r 977r 976b 975b 976r 976b 974b 972b 973r 970b 968b 965b 965b 963b 956b 955b 955r 958r 960r 963r 964r 964r 969r`.trim().split(/\s+/);
  let s = vgrid(935, 995) + hgrid([945, 970]);
  s += rect(55, 935, 990, 60, '#b0eefe');
  P('29,55 114,131 207,291 309,351 377,384 444,487 520,529 613,732 825,842 867,884 893,918 926,986').forEach(([a, b]) => { s += rect(a, 935, b - a, 60, '#6868c0'); });
  const F = { b: ['#2424cc', '#1010b4'], r: ['#d67a82', '#c23c40'], m: ['#a82058', '#981048'] };
  tops.forEach((t, i) => {
    const y = parseInt(t), [f, e] = F[t.slice(-1)], x = Math.round(xAt(i));
    s += rect(x - 4, y, 9, 995 - y, e) + rect(x - 3, y + 2, 6, 993 - y, f);
  });
  s += line(28, 993.500, 1041, 993.500, '#401030', 1);
  put('p-barra', 28, 936, s);
  put('a-barra', 1875, 936, tick(945, '10') + tag(971, '4,9661', '#f01818', 31) + tag(988, '0,5000', '#101418', 31));
}

function drawTime() {
  let s = '';
  for (let k = 0; k < 30; k++) {
    const x = Math.round(X0 + 101.5 * k - .4) + .5;
    s += line(x, 995, x, 998, AXIS);
    if (k) s += text(x, 1008, String(2016 + k), '#101418', 'year');
  }
  put('p-time', 28, 996, s);
}

// Drawing tools of the left bar, one icon per 22px row
const ic = s => `<svg width="20" height="20" viewBox="0 0 20 20" fill="none">${s}</svg>`;
const plus = (x, y) => `<path d="M${x - 2} ${y}h4M${x} ${y - 2}v4" stroke="#11e" stroke-width="1.500"/>`;
const oval = c => ic(`<ellipse cx="10" cy="10" rx="7" ry="5" fill="${c}" fill-opacity=".25" stroke="${c}" stroke-width="1.500"/>${plus(3, 15)}${plus(17, 5)}`);
const hl = (c, w = 2) => ic(`<path d="M1 10h18" stroke="${c}" stroke-width="${w}"/>`);
const dg = (c, w) => ic(`<path d="M1 19L19 1" stroke="${c}" stroke-width="${w}"/>`);
const bell = 'M4 14q3-2 3-6 0-4 3-4t3 4q0 4 3 6z';
const T = c => text(10, 14, 'T', c, 'letter');
const N1 = (x, y, t) => text(x, y, t, '#11e');
const TOOLS = [
  ic('<path d="M7 4v11l3-3 2 5 2-1-2-5h3z" fill="#e8eef1" stroke="#556"/>'),
  ic('<circle cx="8" cy="8" r="4.500" stroke="#333" fill="#b9d0db"/><path d="M11 11l5 6" stroke="#222" stroke-width="2"/>'),
  ic('<path d="M1 6h10v9H1z" stroke="#25f" stroke-dasharray="2 1"/><circle cx="11" cy="8" r="4.500" stroke="#333" fill="#b9d0db"/><path d="M14 11l4 5" stroke="#222" stroke-width="2"/>'),
  ic(`<path d="M2 15q3-2 3-5 0-3 2-3t2 3q0 3 3 5z" fill="#f4dc1c" stroke="#863"/><path d="M2 5h9" stroke="#222"/><path d="M11 2l5 6M16 2l-5 6" stroke="#12e"/><path d="M13 6v9l2-2 2 4 1-5h1z" fill="#fff" stroke="#777"/>`),
  ic(`<path d="${bell}" fill="#f4dc1c" stroke="#863"/><path d="M9 15h3v2H9z" fill="#642"/><path d="M3 4q-2 3 0 5M17 4q2 3 0 5" stroke="#666"/>`),
  ic(`<path d="M2 12L4 4l4 8h6" stroke="#222"/><path d="M7 9h11" stroke="#e64" stroke-dasharray="1 1"/>${plus(4, 5)}${N1(13, 16, 'F')}`),
  ic(`<path d="M5 6h12" stroke="#e64" stroke-dasharray="1 1"/><path d="M5 8h8" stroke="#25f"/>${N1(13, 14, 'F')}`),
  ic(`<path d="M4 6h12v8H4z" stroke="#5a96ff"/>${plus(4, 14)}${plus(16, 5)}`),
  ic(`<path d="M4 6h12v8H4z" fill="#c08c98" stroke="#e11" stroke-width="1.500"/>${plus(4, 15)}${plus(16, 5)}`),
  ic('<path d="M5 15L16 5" stroke="#000" stroke-width="2"/><path d="M11 4h6v6z" fill="#000"/><circle cx="5" cy="15" r="2" stroke="#000"/>'),
  ic('<rect x="3" y="3" width="14" height="14" rx="2" stroke="#5a96ff" fill="#a6c5ea"/>' + T('#111')),
  ic('<path d="M10 3a7 7 0 1 0 3 13l2 3v-4a7 7 0 0 0-5-12z" stroke="#5a96ff" fill="#a6c5ea"/>' + T('#170')),
  ic('<path d="M6 14l8-8" stroke="#222" stroke-width="1.500"/><circle cx="5" cy="15" r="2" stroke="#222"/><circle cx="15" cy="5" r="2" stroke="#222"/>'),
  ic('<path d="M8 10h11" stroke="#3a3" stroke-width="2"/><circle cx="8" cy="10" r="1.500" stroke="#3a3"/>'),
  ic('<path d="M8 10h11" stroke="#e22" stroke-width="2"/><circle cx="8" cy="10" r="1.500" stroke="#e22"/>'),
  ic('<path d="M3 14L14 3l4 3L6 18z" stroke="#555" fill="#aab9c4"/><path d="M7 11l2 2M10 8l2 2M13 5l2 2" stroke="#555"/>'),
  ic('<path d="M2 2h16v5H2z" fill="#7dae98"/><path d="M2 13h16v5H2z" fill="#b08f99"/><path d="M2 13l4-5 4 6 6-8 2 3" stroke="#b8d0ff" stroke-width="1.500"/>'),
  oval('#e22'), oval('#8b5a2b'), oval('#1a8a1a'), oval('#22ee22'),
  dg('#222', 1), dg('#3db53d', 2), dg('#f11', 2), hl('#222', 1), hl('#f08888'), hl('#0e0'), hl('#0a8a0a'), hl('#f11'), hl('#6495ff'), hl('#0000a0'),
  ic('<path d="M10 1v18" stroke="#222"/>'),
  ic(`<path d="M1 16L15 4M1 16h17" stroke="#d55"/>${N1(8, 14, 'a°')}`),
  ic(`<circle cx="9" cy="10" r="6" stroke="#e98050" stroke-width="1.500"/>${plus(9, 10)}${plus(15, 5)}`),
  ic(`${N1(0, 10, '1')}${N1(7, 8, '3+')}${N1(4, 18, '+2')}${N1(10, 14, '+4')}<path d="M3 13l5-7 3 8 6-9" stroke="#58f"/>`),
  ic(`${N1(0, 15, 'a+')}${N1(8, 8, '+b')}${N1(9, 18, 'c+')}<path d="M4 7l10 7" stroke="#58f"/>`),
  ic('<path d="M2 11l4-2 3 4 6-10 3 2-8 13z" fill="#3cc83c" stroke="#284"/>'),
  ic('<path d="M2 10h4v7H2zM7 10l3-3V3q3 0 3 5h5v3l-2 6H7z" fill="#3cc050" stroke="#284"/>'),
  ic('<path d="M3 6l3-3 4 4 4-4 3 3-4 4 4 4-3 3-4-4-4 4-3-3 4-4z" fill="#f01010" stroke="#a00"/>'),
  ic('<path d="M10 3l8 14H2z" fill="#f7a92c" stroke="#b70"/><path d="M10 7v5M10 14v2" stroke="#222" stroke-width="2"/>'),
  ic('<path d="M10 4l5 6h-3v6H8v-6H5z" fill="#1fa52b" stroke="#164"/>'),
  ic('<path d="M8 4h4v6h3l-5 6-5-6h3z" fill="#e11"/>')
];
document.getElementById('tools').innerHTML = TOOLS.map((t, i) => `<div class="tool${i ? '' : ' on'}">${t}</div>`).join('');

drawMain(); drawTrenes(); drawWilly(); drawAwesome(); drawBarra(); drawTime();
```
